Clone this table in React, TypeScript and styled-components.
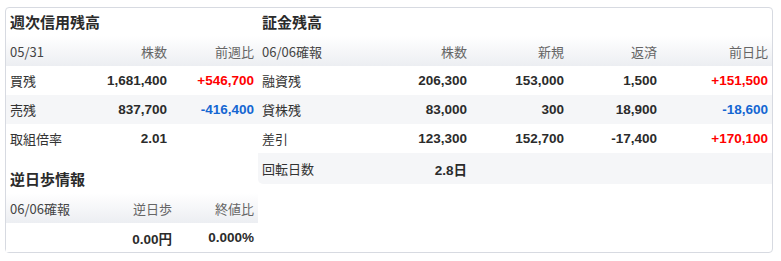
import styled, { createGlobalStyle } from "styled-components";

const GlobalStyle = createGlobalStyle`
  body {
    margin: 0;
    background: #fff;
    font-family: "Liberation Sans", "Noto Sans CJK JP", sans-serif;
    color: #333;
  }
`;

const Frame = styled.div`
  margin: 7px 0 0 5px;
  width: 766px;
  height: 244px;
  border: 1px solid #d7dae1;
  border-radius: 4px;
  display: flex;
`;

const Panel = styled.div<{ $width: number }>`
  width: ${(p) => p.$width}px;
  display: flex;
  flex-direction: column;
`;

const Title = styled.div<{ $top?: number }>`
  height: 28px;
  line-height: 28px;
  padding: ${(p) => p.$top ?? 0}px 0 0 4px;
  font-size: 15px;
  font-weight: bold;
  color: #2b2b2b;
  font-family: "Noto Sans CJK JP", sans-serif;
`;

const Grid = styled.div<{ $cols: string }>`
  display: grid;
  grid-template-columns: ${(p) => p.$cols};
`;

const Row = styled.div<{ $kind?: "head" | "alt" | "plain"; $h?: number; $round?: boolean }>`
  display: contents;
  & > div {
    height: ${(p) => p.$h ?? 29}px;
    background: ${(p) =>
      p.$kind === "head"
        ? "linear-gradient(#ffffff, #eceef2)"
        : p.$kind === "alt"
        ? "#f5f6f8"
        : "#fff"};
  }
  ${(p) => p.$round && `& > div:first-child { border-bottom-left-radius: 5px; }`}
`;

const Cell = styled.div<{ $head?: boolean; $tone?: "up" | "down" }>`
  display: flex;
  align-items: center;
  justify-content: flex-end;
  padding-right: 4px;
  font-size: ${(p) => (p.$head ? 13 : 13.5)}px;
  font-weight: ${(p) => (p.$head ? "normal" : "bold")};
  color: ${(p) =>
    p.$tone === "up" ? "#ff0000" : p.$tone === "down" ? "#1466d2" : p.$head ? "#666" : "#2b2b2b"};
  font-family: ${(p) =>
    p.$head ? `"Noto Sans CJK JP", sans-serif` : `"Liberation Sans", "Noto Sans CJK JP", sans-serif`};
`;

const Label = styled.div<{ $head?: boolean }>`
  display: flex;
  align-items: center;
  padding-left: 4px;
  font-size: 13px;
  color: ${(p) => (p.$head ? "#444" : "#333")};
  font-family: "Noto Sans CJK JP", sans-serif;
`;

type Tone = "up" | "down" | undefined;
const tone = (v: string): Tone => (v.startsWith("+") ? "up" : v.startsWith("-") ? "down" : undefined);

const shogin = [
  ["融資残", "206,300", "153,000", "1,500", "+151,500"],
  ["貸株残", "83,000", "300", "18,900", "-18,600"],
  ["差引", "123,300", "152,700", "-17,400", "+170,100"],
];

export default function App() {
  return (
    <>
      <GlobalStyle />
      <Frame>
        <Panel $width={252}>
          <Title>週次信用残高</Title>
          <Grid $cols="78px 87px 87px">
            <Row $kind="head" $h={30}>
              <Label $head>05/31</Label>
              <Cell $head>株数</Cell>
              <Cell $head>前週比</Cell>
            </Row>
            <Row>
              <Label>買残</Label>
              <Cell>1,681,400</Cell>
              <Cell $tone="up">+546,700</Cell>
            </Row>
            <Row $kind="alt">
              <Label>売残</Label>
              <Cell>837,700</Cell>
              <Cell $tone="down">-416,400</Cell>
            </Row>
            <Row>
              <Label>取組倍率</Label>
              <Cell>2.01</Cell>
              <div />
            </Row>
          </Grid>
          <Title $top={12}>逆日歩情報</Title>
          <Grid $cols="84px 86px 82px">
            <Row $kind="head" $h={30}>
              <Label $head>06/06確報</Label>
              <Cell $head>逆日歩</Cell>
              <Cell $head>終値比</Cell>
            </Row>
            <Row>
              <div />
              <Cell>0.00円</Cell>
              <Cell>0.000%</Cell>
            </Row>
          </Grid>
        </Panel>
        <Panel $width={514}>
          <Title>証金残高</Title>
          <Grid $cols="100px 113px 97px 93px 111px">
            <Row $kind="head" $h={30}>
              <Label $head>06/06確報</Label>
              <Cell $head>株数</Cell>
              <Cell $head>新規</Cell>
              <Cell $head>返済</Cell>
              <Cell $head>前日比</Cell>
            </Row>
            {shogin.map((r, i) => (
              <Row key={r[0]} $kind={i === 1 ? "alt" : "plain"}>
                <Label>{r[0]}</Label>
                {r.slice(1).map((v, j) => (
                  <Cell key={j} $tone={j === 3 ? tone(v) : undefined}>
                    {v}
                  </Cell>
                ))}
              </Row>
            ))}
            <Row $kind="alt" $h={31} $round>
              <Label>回転日数</Label>
              <Cell>2.8日</Cell>
              <div />
              <div />
              <div />
            </Row>
          </Grid>
        </Panel>
      </Frame>
    </>
  );
}
